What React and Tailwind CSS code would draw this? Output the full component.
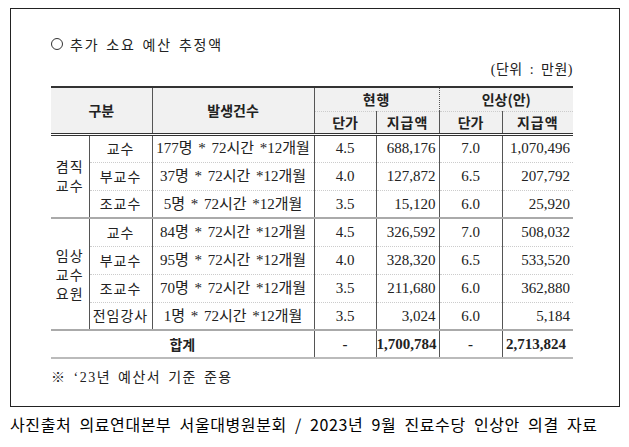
const serif = { fontFamily: '"Liberation Serif", "Noto Sans CJK KR", serif' };
const sans = { fontFamily: '"Noto Sans CJK KR", sans-serif' };

const groups = [
  {
    label: ['겸직', '교수'],
    rows: [
      ['교수', '177명 * 72시간 *12개월', '4.5', '688,176', '7.0', '1,070,496'],
      ['부교수', '37명 * 72시간 *12개월', '4.0', '127,872', '6.5', '207,792'],
      ['조교수', '5명 * 72시간 *12개월', '3.5', '15,120', '6.0', '25,920'],
    ],
  },
  {
    label: ['임상', '교수', '요원'],
    rows: [
      ['교수', '84명 * 72시간 *12개월', '4.5', '326,592', '7.0', '508,032'],
      ['부교수', '95명 * 72시간 *12개월', '4.0', '328,320', '6.5', '533,520'],
      ['조교수', '70명 * 72시간 *12개월', '3.5', '211,680', '6.0', '362,880'],
      ['전임강사', '1명 * 72시간 *12개월', '3.5', '3,024', '6.0', '5,184'],
    ],
  },
];

const vline = 'border-r border-r-[#555]';

export default function App() {
  return (
    <div className="w-[629px] h-[447px] bg-white text-[#222]" style={sans}>
      <div className="ml-[10px] mt-[8px] w-[610px] h-[399px] border border-[#222] pl-[40px] pt-[25px]">
        {/* title */}
        <div className="h-[20px] leading-[20px] text-[14px] flex items-center gap-[7px]">
          <span className="inline-block w-[12px] h-[12px] rounded-full border border-[#333]"></span>
          <span className="tracking-[1.8px] [word-spacing:2px]">추가 소요 예산 추정액</span>
        </div>
        <div className="mt-[6px] h-[20px] leading-[20px] w-[522px] text-right text-[14px] tracking-[0.5px] [word-spacing:3px]" style={serif}>
          (단위 : 만원)
        </div>

        {/* table */}
        <table className="mt-[6px] w-[522px] table-fixed border-collapse text-[15px]" style={serif}>
          <colgroup>
            <col className="w-[38px]" />
            <col className="w-[63px]" />
            <col className="w-[162px]" />
            <col className="w-[62px]" />
            <col className="w-[63px]" />
            <col className="w-[63px]" />
            <col className="w-[71px]" />
          </colgroup>
          <thead className="bg-[#f1f1f1] font-bold" style={sans}>
            <tr className="h-[24px] border-t-2 border-t-[#333]">
              <th rowSpan={2} colSpan={2} className={`${vline} text-[14px]`}>구분</th>
              <th rowSpan={2} className={`${vline} text-[14px]`}>발생건수</th>
              <th colSpan={2} className={`${vline} text-[14px] border-b border-b-[#ccc] border-dotted tracking-[1px]`}>현행</th>
              <th colSpan={2} className="text-[14px] border-b border-b-[#ccc] border-dotted">인상(안)</th>
            </tr>
            <tr className="h-[23px] border-b-[3px] border-double border-b-[#333]">
              <th className={`${vline} text-[14px]`}>단가</th>
              <th className={`${vline} text-[14px] tracking-[1px]`}>지급액</th>
              <th className={`${vline} text-[14px]`}>단가</th>
              <th className="text-[14px] tracking-[1px]">지급액</th>
            </tr>
          </thead>
          <tbody>
            {groups.map((g, gi) =>
              g.rows.map((r, ri) => (
                <tr
                  key={gi + '-' + ri}
                  className={`h-[28px] ${ri === g.rows.length - 1 ? 'border-b-2 border-b-[#aaa]' : 'border-b border-b-[#ccc] border-dotted'}`}
                >
                  {ri === 0 && (
                    <td rowSpan={g.rows.length} className={`${vline} text-center leading-[19px] text-[14px] tracking-[1px]`} style={sans}>
                      {g.label.map((l) => (
                        <div key={l}>{l}</div>
                      ))}
                    </td>
                  )}
                  <td className={`${vline} text-center text-[14px] tracking-[1px]`} style={sans}>{r[0]}</td>
                  <td className={`${vline} text-center whitespace-nowrap [word-spacing:2px]`}>{r[1]}</td>
                  <td className={`${vline} text-center`}>{r[2]}</td>
                  <td className={`${vline} text-right pr-[3px]`}>{r[3]}</td>
                  <td className={`${vline} text-center`}>{r[4]}</td>
                  <td className="text-right pr-[3px]">{r[5]}</td>
                </tr>
              ))
            )}
            <tr className="h-[28px] border-b-2 border-b-[#bbb] font-bold">
              <td colSpan={3} className={`${vline} text-center text-[14px]`} style={sans}>합계</td>
              <td className={`${vline} text-center`}>-</td>
              <td className={`${vline} text-right pr-[3px]`}>1,700,784</td>
              <td className={`${vline} text-center`}>-</td>
              <td className="text-right pr-[7px]">2,713,824</td>
            </tr>
          </tbody>
        </table>

        <div className="mt-[9px] h-[20px] leading-[20px] text-[14px] tracking-[1.5px] [word-spacing:2px]" style={serif}>
          ※ ‘23년 예산서 기준 준용
        </div>
      </div>

      <div className="mt-[6px] ml-[10px] h-[22px] leading-[22px] text-[16px] text-black whitespace-nowrap tracking-[0.6px] [word-spacing:4px]">
        사진출처 의료연대본부 서울대병원분회 / 2023년 9월 진료수당 인상안 의결 자료
      </div>
    </div>
  );
}
